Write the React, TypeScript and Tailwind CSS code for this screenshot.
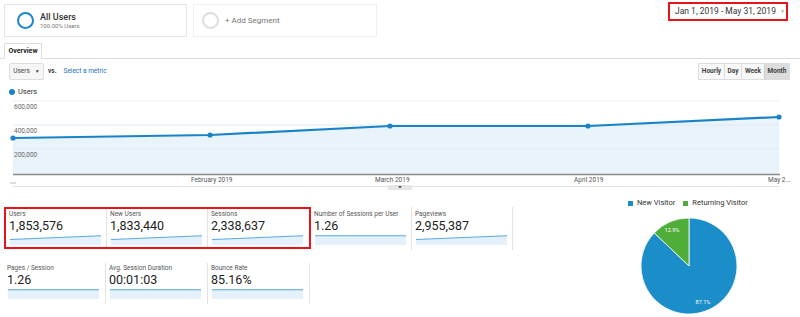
import React from 'react';

type Metric = { label: string; value: string; flat?: boolean };

const rowOne: Metric[] = [
    { label: 'Users', value: '1,853,576' },
    { label: 'New Users', value: '1,833,440' },
    { label: 'Sessions', value: '2,338,637' },
];

const rowOneRest: Metric[] = [
    { label: 'Number of Sessions per User', value: '1.26', flat: true },
    { label: 'Pageviews', value: '2,955,387' },
];

const rowTwo: Metric[] = [
    { label: 'Pages / Session', value: '1.26', flat: true },
    { label: 'Avg. Session Duration', value: '00:01:03', flat: true },
    { label: 'Bounce Rate', value: '85.16%', flat: true },
];

function Spark(props: { flat?: boolean }): JSX.Element {
    const y0 = props.flat ? 0.75 : 4.5;
    return (
        <svg width="91" height="10" className="block">
            <polygon points={`0,${y0} 91,0.75 91,10 0,10`} fill="#e4f1fa" />
            <line x1="0" y1={y0} x2="91" y2="0.75" stroke="#56a9de" strokeWidth="1.1" />
        </svg>
    );
}

function MetricCell(props: { m: Metric; w: string; pt: string; h: string; divider?: boolean }): JSX.Element {
    return (
        <div
            className={`${props.w} ${props.h} ${props.pt} pl-[3px] ${
                props.divider ? 'border-r border-[#e3e3e3]' : ''
            } shrink-0`}
        >
            <div className="text-[6.5px] leading-[8px] text-[#555] whitespace-nowrap">{props.m.label}</div>
            <div className="text-[12.5px] leading-[15px] text-[#222]">{props.m.value}</div>
            <div className="mt-[2px] ml-[1px]">
                <Spark flat={props.m.flat} />
            </div>
        </div>
    );
}

function Chart(): JSX.Element {
    const pts: [number, number][] = [
        [13, 40],
        [210, 37],
        [390, 28],
        [588, 28],
        [779, 19],
    ];
    const line = pts.map((p) => p.join(',')).join(' ');
    return (
        <div className="relative h-[94px] w-[800px]">
            <svg width="800" height="94" className="absolute left-0 top-0">
                <line x1="13" y1="3" x2="780" y2="3" stroke="#f1f1f1" />
                <polygon points={`${line} 779,76 13,76`} fill="#e9f3fa" />
                <line x1="13" y1="27" x2="780" y2="27" stroke="#dfeaf2" />
                <line x1="13" y1="51" x2="780" y2="51" stroke="#dfeaf2" />
                <polyline points={line} fill="none" stroke="#1a83c8" strokeWidth="2.2" />
                {pts.map((p, i) => (
                    <circle key={i} cx={p[0]} cy={p[1]} r="2.6" fill="#1a83c8" />
                ))}
                <line x1="13" y1="76.5" x2="780" y2="76.5" stroke="#8c8c8c" strokeWidth="1.5" />
                <line x1="10" y1="85" x2="16" y2="85" stroke="#aaa" strokeWidth="0.8" />
                <line x1="13" y1="88.5" x2="780" y2="88.5" stroke="#e2e2e2" />
                <rect x="388" y="87" width="24" height="5" rx="1" fill="#e6e6e6" />
                <polygon points="398,88 402,88 400,90.5" fill="#555" />
            </svg>
            <span className="absolute left-[14px] top-[5px] text-[6.5px] leading-[8px] text-[#666]">600,000</span>
            <span className="absolute left-[14px] top-[29px] text-[6.5px] leading-[8px] text-[#666]">400,000</span>
            <span className="absolute left-[14px] top-[53px] text-[6.5px] leading-[8px] text-[#666]">200,000</span>
            <span className="absolute left-[191px] top-[78px] text-[6.5px] leading-[8px] text-[#555]">February 2019</span>
            <span className="absolute left-[375px] top-[78px] text-[6.5px] leading-[8px] text-[#555]">March 2019</span>
            <span className="absolute left-[574px] top-[78px] text-[6.5px] leading-[8px] text-[#555]">April 2019</span>
            <span className="absolute left-[768px] top-[78px] text-[6.5px] leading-[8px] text-[#555]">May 2...</span>
        </div>
    );
}

function Pie(): JSX.Element {
    return (
        <svg width="100" height="100" className="block">
            <path d="M50,50 L15.24,16.9 A48,48 0 1,0 50,2 Z" fill="#1b8ec9" stroke="#fff" strokeWidth="0.8" />
            <path d="M50,50 L50,2 A48,48 0 0,0 15.24,16.9 Z" fill="#4fae3a" stroke="#fff" strokeWidth="0.8" />
            <text x="33" y="16" fontSize="5.5" fill="#fff" textAnchor="middle" fontFamily="Roboto, sans-serif">
                12.9%
            </text>
            <text x="64" y="88" fontSize="5.5" fill="#fff" textAnchor="middle" fontFamily="Roboto, sans-serif">
                87.1%
            </text>
        </svg>
    );
}

export default function App(): JSX.Element {
    return (
        <div className="w-[800px] h-[317px] overflow-hidden bg-white font-[Roboto,'Liberation_Sans',sans-serif] text-[#333]">
            {/* segments + date range */}
            <div className="flex h-[40px] items-start px-[4px] pt-[4px]">
                <div className="flex h-[33px] w-[183px] items-center border border-[#e6e6e6] pl-[12px]">
                    <div className="h-[17px] w-[17px] rounded-full border-[2.5px] border-[#1a86cc]" />
                    <div className="ml-[6px]">
                        <div className="text-[9px] leading-[10px] font-medium text-[#333]">All Users</div>
                        <div className="text-[6px] leading-[7px] text-[#777]">100.00% Users</div>
                    </div>
                </div>
                <div className="ml-[6px] flex h-[33px] w-[184px] items-center border border-[#efefef] pl-[8px]">
                    <div className="h-[17px] w-[17px] rounded-full border-[2px] border-[#dedede]" />
                    <div className="ml-[6px] text-[8px] text-[#777]">+ Add Segment</div>
                </div>
                <div className="ml-auto mr-[8px] mt-[-2px] flex h-[19px] w-[120px] items-center border-2 border-[#e8141c] pl-[5px]">
                    <span className="text-[8.5px] text-[#333] whitespace-nowrap">Jan 1, 2019 - May 31, 2019</span>
                    <span className="ml-[4px] text-[5px] text-[#aaa]">▼</span>
                </div>
            </div>

            {/* tab */}
            <div className="mt-[3px] flex h-[16px] items-end border-b border-[#ddd] px-[4px]">
                <div className="relative top-[1px] flex h-[16px] w-[38px] items-center justify-center border border-b-0 border-[#ddd] bg-white text-[7px] font-bold text-[#222]">
                    Overview
                </div>
            </div>

            {/* controls */}
            <div className="mt-[4px] flex h-[17px] items-center pl-[9px] pr-[10px]">
                <div className="flex h-[17px] w-[35px] items-center justify-center gap-[5px] rounded-[2px] border border-[#ddd] bg-[#f6f6f6] text-[6.5px] text-[#444]">
                    Users <span className="text-[5px]">▼</span>
                </div>
                <span className="ml-[4px] text-[6.5px] font-bold text-[#444]">vs.</span>
                <span className="ml-[7px] text-[6.5px] text-[#2470b9]">Select a metric</span>
                <div className="ml-auto flex h-[17px] border border-[#ddd] text-[6.5px] font-bold text-[#444]">
                    <div className="flex w-[25px] items-center justify-center bg-[#f8f8f8]">Hourly</div>
                    <div className="flex w-[17px] items-center justify-center border-l border-[#ddd] bg-[#f8f8f8]">Day</div>
                    <div className="flex w-[23px] items-center justify-center border-l border-[#ddd] bg-[#f8f8f8]">Week</div>
                    <div className="flex w-[25px] items-center justify-center border-l border-[#ccc] bg-[#dcdcdc]">Month</div>
                </div>
            </div>

            {/* legend */}
            <div className="mt-[6px] flex h-[12px] items-center pl-[9px]">
                <span className="h-[6px] w-[6px] rounded-full bg-[#1a83c8]" />
                <span className="ml-[3px] text-[7.5px] text-[#333]">Users</span>
            </div>

            <Chart />

            {/* metrics + pie */}
            <div className="flex">
                <div className="w-[520px] shrink-0 pl-[4px]">
                    <div className="mt-[15px] flex">
                        <div className="flex h-[42px] w-[307px] border-2 border-[#e8141c]">
                            {rowOne.map((m, i) => (
                                <MetricCell key={m.label} m={m} w="w-[101px]" h="h-[38px]" pt="pt-[1px]" divider={i < 2} />
                            ))}
                        </div>
                        {rowOneRest.map((m) => (
                            <MetricCell key={m.label} m={m} w="w-[101px]" h="h-[43px]" pt="pt-[3px]" divider />
                        ))}
                    </div>
                    <div className="mt-[13px] flex">
                        {rowTwo.map((m) => (
                            <MetricCell key={m.label} m={m} w="w-[102px]" h="h-[41px]" pt="pt-[1px]" divider />
                        ))}
                    </div>
                </div>
                <div className="flex-1">
                    <div className="ml-[108px] mt-[7px] flex h-[8px] items-center text-[7.5px] text-[#333] whitespace-nowrap">
                        <span className="h-[5px] w-[5px] bg-[#1b8ec9]" />
                        <span className="ml-[4px]">New Visitor</span>
                        <span className="ml-[8px] h-[5px] w-[5px] bg-[#4fae3a]" />
                        <span className="ml-[4px]">Returning Visitor</span>
                    </div>
                    <div className="ml-[119px] mt-[9px]">
                        <Pie />
                    </div>
                </div>
            </div>
        </div>
    );
}
